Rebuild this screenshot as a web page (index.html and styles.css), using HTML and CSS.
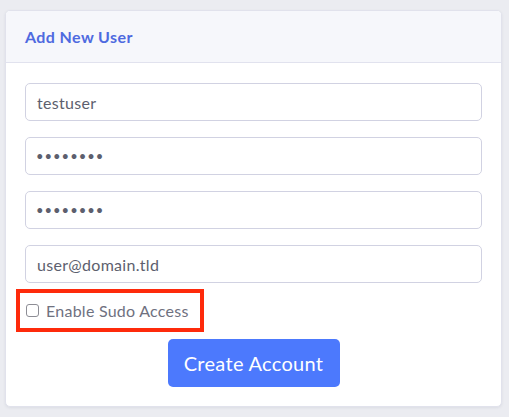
FILE: index.html
```html
<!DOCTYPE html>
<html lang="en">
<head>
<meta charset="utf-8">
<title>Add New User</title>
<link rel="stylesheet" href="styles.css">
</head>
<body>
<div class="card">
  <div class="card-header">Add New User</div>
  <form class="card-body">
    <input class="field" type="text" value="testuser">
    <input class="field" type="password" value="password">
    <input class="field" type="password" value="password">
    <input class="field" type="text" value="user@domain.tld">
    <div class="highlight">
      <label class="check"><input class="box" type="checkbox"><span>Enable Sudo Access</span></label>
    </div>
    <div class="actions">
      <button class="btn" type="button">Create Account</button>
    </div>
  </form>
</div>
</body>
</html>
```
FILE: styles.css
```css
html, body {
  margin: 0;
  padding: 0;
}
body {
  background: #ebecf1;
  font-family: Lato, "Open Sans", sans-serif;
  padding: 10px 7px 10px 5px;
}
.card {
  background: #fff;
  border: 1px solid #e1e2ec;
  border-radius: 5px;
  box-shadow: 0 1px 3px rgba(40, 45, 80, 0.08);
  overflow: hidden;
}
.card-header {
  background: #f6f7fb;
  border-bottom: 1px solid #e1e2ee;
  height: 52px;
  box-sizing: border-box;
  padding: 0 19px;
  display: flex;
  align-items: center;
  color: #4e6ae0;
  font-weight: 700;
  font-size: 16px;
  letter-spacing: 0.4px;
}
.card-body {
  margin: 0;
  padding: 20px 19px 19px 19px;
  display: flex;
  flex-direction: column;
}
.field {
  display: block;
  height: 38px;
  box-sizing: border-box;
  border: 1px solid #d1d2e2;
  border-radius: 5px;
  padding: 0 11px;
  font-family: inherit;
  font-size: 16px;
  letter-spacing: 0.3px;
  color: #5d5f6e;
  margin: 0 0 16px 0;
  width: 100%;
  outline: none;
}
.field:nth-of-type(4) {
  margin-bottom: 6px;
}
.field[type="password"] {
  letter-spacing: 1px;
  font-size: 13px;
  padding-left: 10px;
}
.highlight {
  width: 188px;
  box-sizing: border-box;
  margin-left: -9px;
  border: 4px solid #fe2a0b;
  padding: 5px 0 5px 6px;
}
.check {
  display: flex;
  align-items: center;
  height: 25px;
  color: #6f717f;
  font-size: 16px;
  letter-spacing: 0.25px;
}
.box {
  appearance: none;
  -webkit-appearance: none;
  width: 13px;
  height: 13px;
  margin: 0 7px 0 0;
  border: 1px solid #8d8d95;
  border-radius: 3px;
  background: #fff;
  box-sizing: border-box;
}
.actions {
  display: flex;
  justify-content: center;
  margin-top: 7px;
}
.btn {
  width: 172px;
  height: 48px;
  border: none;
  border-radius: 5px;
  background: #4c79fd;
  color: #fff;
  font-family: inherit;
  font-size: 20px;
  letter-spacing: 0.3px;
}
```
